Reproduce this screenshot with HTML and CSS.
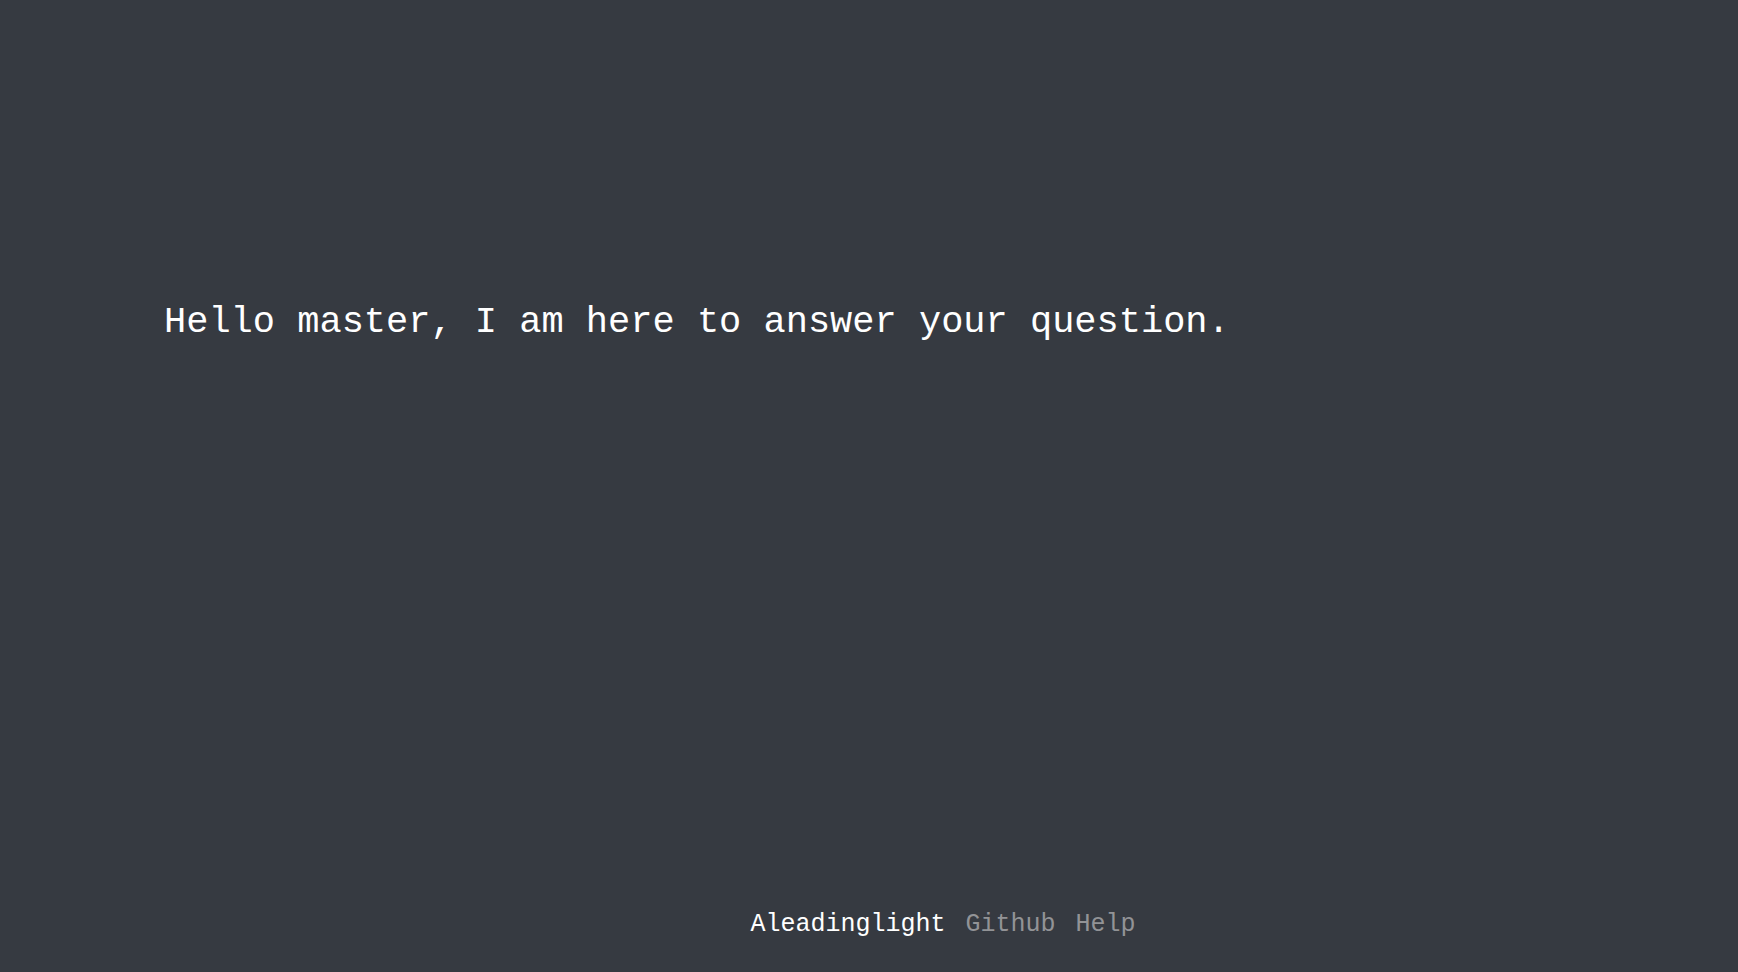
FILE: index.html
```html
<!DOCTYPE html>
<html lang="en">
<head>
<meta charset="utf-8">
<meta name="viewport" content="width=device-width, initial-scale=1">
<title>Aleadinglight</title>
<link rel="stylesheet" href="styles.css">
</head>
<body class="page">
<main class="main">
<h1 class="greeting">Hello master, I am here to answer your question.</h1>
</main>
<footer class="footer">
<nav class="links">
<a class="link link-active" href="#">Aleadinglight</a>
<a class="link" href="#">Github</a>
<a class="link" href="#help">Help</a>
</nav>
</footer>
</body>
</html>
```

FILE: styles.css
```css
.page {
  display: flex;
  flex-direction: column;
  min-height: 100vh;
  margin: 0;
  background: #363a41;
  color: #fff;
  font-family: "Liberation Mono", "Courier New", monospace;
}

.main {
  flex: 1;
  padding: 302px 164px 0;
}

.greeting {
  margin: 0;
  font-size: 37px;
  line-height: 40px;
  font-weight: 400;
}

.footer {
  padding: 0 0 31px 148px;
}

.links {
  display: flex;
  justify-content: center;
  gap: 20px;
}

.link {
  color: #929396;
  font-size: 25px;
  line-height: 32px;
  text-decoration: none;
}

.link-active {
  color: #fff;
}
```
